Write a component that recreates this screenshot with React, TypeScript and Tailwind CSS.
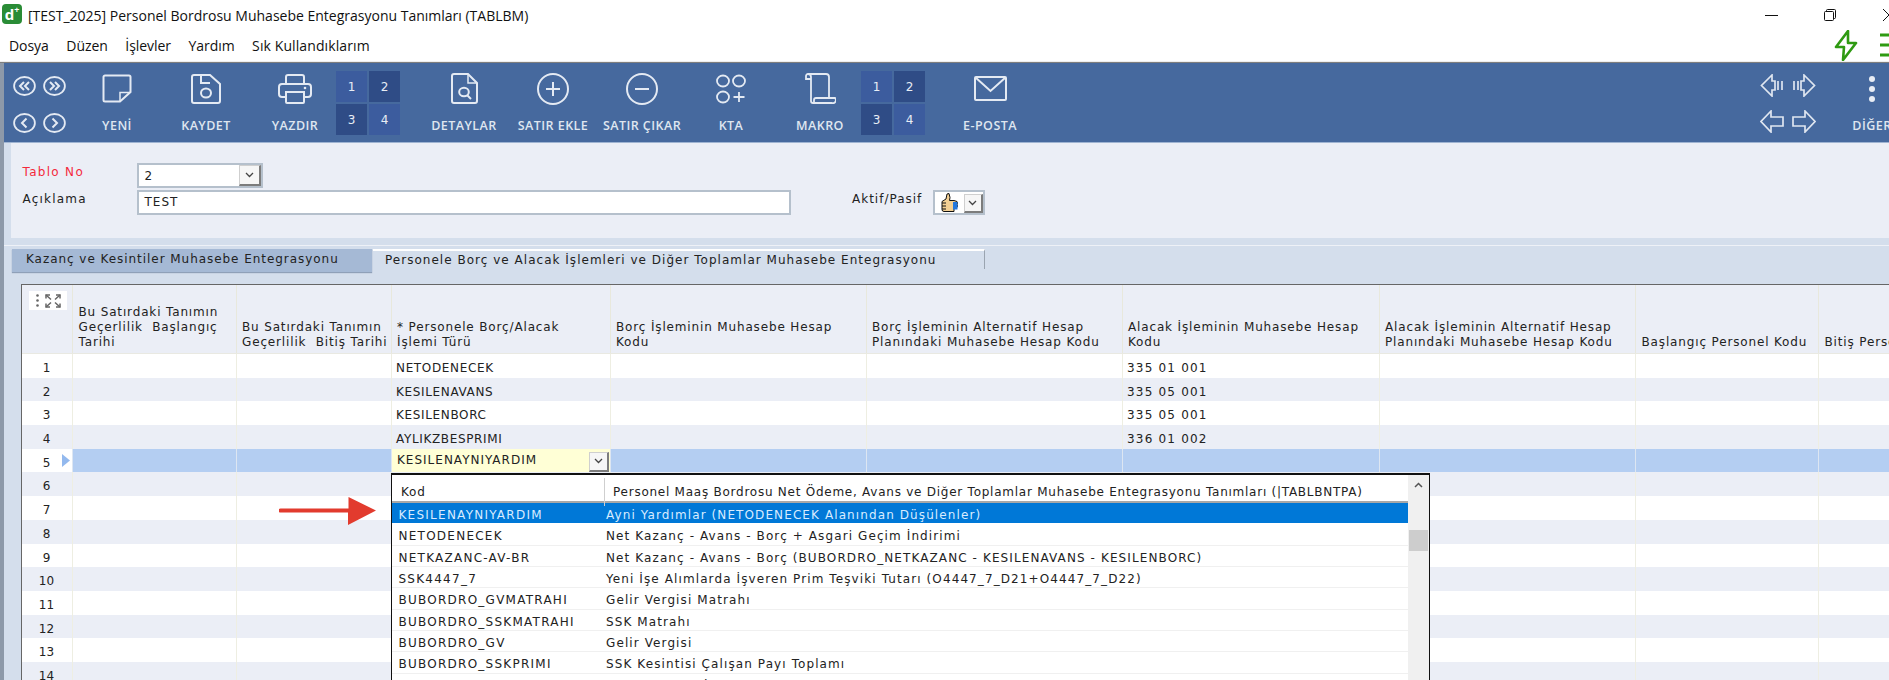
/**
 * Personel Bordrosu Muhasebe Entegrasyonu form (TABLBM): window chrome, blue toolbar,
 * header fields, tabs, the editable grid and the open lookup dropdown on row 5.
 */
import type { ReactNode } from "react";

const ICON = "#e4eaf3";

function Ellipse({ children }: { children: ReactNode }) {
  return (
    <svg width="23" height="20" viewBox="0 0 23 20" fill="none" stroke={ICON} strokeWidth="1.8">
      <ellipse cx="11.5" cy="10" rx="10.4" ry="9" />
      {children}
    </svg>
  );
}

function NavCircles() {
  return (
    <div className="w-[68.5px] shrink-0 pl-[9px] pt-[13px] grid grid-cols-[23px_23px] gap-x-[7px] gap-y-[17px] content-start">
      <Ellipse><path d="M11 6 7 10l4 4M16 6l-4 4 4 4" strokeWidth="2" /></Ellipse>
      <Ellipse><path d="M7 6l4 4-4 4M12 6l4 4-4 4" strokeWidth="2" /></Ellipse>
      <Ellipse><path d="M13.5 5.5 9 10l4.5 4.5" strokeWidth="2" /></Ellipse>
      <Ellipse><path d="M9.5 5.5 14 10l-4.5 4.5" strokeWidth="2" /></Ellipse>
    </div>
  );
}

function Tool({ label, children }: { label: string; children: ReactNode }) {
  return (
    <div className="w-[89px] shrink-0 pt-[9px] flex flex-col items-center">
      <div className="h-[33px] flex items-center justify-center">{children}</div>
      <div className="mt-[13px] h-[16px] whitespace-nowrap font-['Open_Sans'] text-[12.5px] font-semibold leading-[16px] tracking-[0.45px] text-[#dfe6f0]">
        {label}
      </div>
    </div>
  );
}

function PageGrid({ className }: { className: string }) {
  const cell = "flex items-center justify-center font-['DejaVu_Sans'] text-[12px] text-[#e8edf5]";
  return (
    <div className={`mt-[8px] w-[64px] shrink-0 h-[64px] grid grid-cols-[31px_31px] grid-rows-[31px_31px] gap-[2px] ${className}`}>
      <div className={`${cell} bg-[#3c5c9e]`}>1</div>
      <div className={`${cell} bg-[#2f4c86]`}>2</div>
      <div className={`${cell} bg-[#2f4c86]`}>3</div>
      <div className={`${cell} bg-[#3c5c9e]`}>4</div>
    </div>
  );
}

const arrowProps = { fill: "none", stroke: "#dfe6f0", strokeWidth: 1.7 };

function RecordArrows() {
  return (
    <div className="ml-[725.5px] w-[57px] shrink-0 pt-[11px] grid grid-cols-[24px_24px] gap-x-[8px] gap-y-[13px] content-start">
      <svg width="24" height="23" viewBox="0 0 24 23" {...arrowProps}>
        <path d="M12 1 1.5 11.5 12 22v-6h3V7h-3zM18 7v9M22 7v9" />
      </svg>
      <svg width="24" height="23" viewBox="0 0 24 23" {...arrowProps}>
        <path d="M12 1 22.5 11.5 12 22v-6H9V7h3zM6 7v9M2 7v9" />
      </svg>
      <svg width="24" height="23" viewBox="0 0 24 23" {...arrowProps}>
        <path d="M11 1 1 11.5 11 22v-6h12V7H11z" />
      </svg>
      <svg width="24" height="23" viewBox="0 0 24 23" {...arrowProps}>
        <path d="M13 1l10 10.5L13 22v-6H1V7h12z" />
      </svg>
    </div>
  );
}

function Toolbar() {
  return (
    <div className="h-[79px] shrink-0 flex overflow-hidden bg-[#46699e]">
      <NavCircles />
      <Tool label="YENİ">
        <svg width="30" height="29" viewBox="0 0 30 29" fill="none" stroke={ICON} strokeWidth="2">
          <path d="M3 1.5h24a1.5 1.5 0 0 1 1.500 1.500V18L18 27.500H3A1.500 1.500 0 0 1 1.500 26V3A1.500 1.500 0 0 1 3 1.500z" />
          <path d="M18 27V18.500h10" strokeWidth="1.5" />
        </svg>
      </Tool>
      <Tool label="KAYDET">
        <svg width="30" height="30" viewBox="0 0 30 30" fill="none" stroke={ICON} strokeWidth="2">
          <path d="M3 1h16l10 9v17a2 2 0 0 1-2 2H3a2 2 0 0 1-2-2V3a2 2 0 0 1 2-2z" />
          <path d="M10 1v8h9" />
          <ellipse cx="15" cy="19" rx="5" ry="4.500" />
        </svg>
      </Tool>
      <Tool label="YAZDIR">
        <svg width="34" height="30" viewBox="0 0 34 30" fill="none" stroke={ICON} strokeWidth="2">
          <path d="M8 10V3a2 2 0 0 1 2-2h14a2 2 0 0 1 2 2v7" />
          <path d="M8 23H4a3 3 0 0 1-3-3v-7a3 3 0 0 1 3-3h26a3 3 0 0 1 3 3v7a3 3 0 0 1-3 3h-4" />
          <path d="M8 18h18v10a1 1 0 0 1-1 1H9a1 1 0 0 1-1-1z" />
          <circle cx="27" cy="14" r="1.300" fill={ICON} stroke="none" />
        </svg>
      </Tool>
      <PageGrid className="ml-[-3.5px]" />
      <div className="w-[19.5px] shrink-0" />
      <Tool label="DETAYLAR">
        <svg width="27" height="31" viewBox="0 0 27 31" fill="none" stroke={ICON} strokeWidth="2">
          <path d="M3 1h14l9 9v18a2 2 0 0 1-2 2H3a2 2 0 0 1-2-2V3a2 2 0 0 1 2-2z" />
          <path d="M17 1v9h9" strokeWidth="1.500" />
          <ellipse cx="13" cy="19" rx="4.800" ry="4.300" />
          <path d="M16.500 22.500 20 26" />
        </svg>
      </Tool>
      <Tool label="SATIR EKLE">
        <svg width="32" height="32" viewBox="0 0 32 32" fill="none" stroke={ICON} strokeWidth="2">
          <circle cx="16" cy="16" r="15" />
          <path d="M16 9v14M9 16h14" />
        </svg>
      </Tool>
      <Tool label="SATIR ÇIKAR">
        <svg width="32" height="32" viewBox="0 0 32 32" fill="none" stroke={ICON} strokeWidth="2">
          <circle cx="16" cy="16" r="15" />
          <path d="M9 16h14" />
        </svg>
      </Tool>
      <Tool label="KTA">
        <svg width="30" height="30" viewBox="0 0 30 30" fill="none" stroke={ICON} strokeWidth="1.800">
          <ellipse cx="7" cy="7" rx="6" ry="5.500" />
          <ellipse cx="23" cy="7" rx="6" ry="5.500" />
          <ellipse cx="7" cy="23" rx="6" ry="5.500" />
          <path d="M23 18v10M17.500 23h11" />
        </svg>
      </Tool>
      <Tool label="MAKRO">
        <svg width="32" height="31" viewBox="0 0 32 31" fill="none" stroke={ICON} strokeWidth="1.800">
          <path d="M7 6H2V3a2 2 0 0 1 2-2h18a3 3 0 0 1 3 3v20" />
          <path d="M4 1a3 3 0 0 1 3 3v24a2 2 0 0 0 2 2h19a3 3 0 0 0 3-5H12a2 2 0 0 0-2 2v3" />
        </svg>
      </Tool>
      <PageGrid className="ml-[-3.5px]" />
      <div className="w-[20.5px] shrink-0" />
      <Tool label="E-POSTA">
        <svg width="33" height="25" viewBox="0 0 33 25" fill="none" stroke={ICON} strokeWidth="2">
          <rect x="1" y="1" width="31" height="23" rx="1" />
          <path d="M1.500 1.500 16.500 15l15-13.500" />
        </svg>
      </Tool>
      <RecordArrows />
      <div className="ml-[10.5px] shrink-0">
        <Tool label="DİĞER">
          <svg width="8" height="28" viewBox="0 0 8 28" fill="#e8edf5">
            <circle cx="4" cy="4" r="3" />
            <circle cx="4" cy="14" r="3" />
            <circle cx="4" cy="24" r="3" />
          </svg>
        </Tool>
      </div>
    </div>
  );
}

function DropButton({ className }: { className: string }) {
  return (
    <div className={`flex items-center justify-center bg-[#f6f6f6] border border-[#cfcfcf] border-r-2 border-b-2 border-r-[#7c7c7c] border-b-[#7c7c7c] ${className}`}>
      <svg width="9" height="6" viewBox="0 0 9 6" fill="none" stroke="#444" strokeWidth="1.300">
        <path d="M1 1l3.500 3.500L8 1" />
      </svg>
    </div>
  );
}

function HeaderForm() {
  return (
    <div className="h-[95px] shrink-0 ml-[7px] bg-[#ebeef6] pt-[20px] font-['DejaVu_Sans'] text-[12px] text-[#222]">
      <div className="flex h-[25px]">
        <div className="w-[125.5px] pl-[11.5px] text-[#f42a3c] tracking-[1.3px]">Tablo No</div>
        <div className="w-[126px] flex bg-white border-2 border-[#b5c0cc]">
          <div className="flex-1 pl-[6px] pt-[2px] tracking-[0.5px]">2</div>
          <DropButton className="w-[22px] h-[21px]" />
        </div>
      </div>
      <div className="flex h-[25px] mt-[2px]">
        <div className="w-[125.5px] pl-[11.5px] tracking-[1.2px]">Açıklama</div>
        <div className="w-[654px] bg-white border-2 border-[#b5c0cc] pl-[6px] pt-[1px] tracking-[1px]">TEST</div>
        <div className="w-[61.5px] ml-[61.5px] tracking-[1px] whitespace-nowrap">Aktif/Pasif</div>
        <div className="ml-[19px] w-[52px] flex bg-white border-2 border-[#b5c0cc]">
          <div className="w-[29px] flex items-center justify-center">
            <svg width="18" height="20" viewBox="0 0 18 20">
              <path d="M7 1l2-.5 1 4-.5 3H14a1.500 1.500 0 0 1 0 8v3H4a2 2 0 0 1-2-2V8.500L6 6z" fill="#f2cf93" stroke="#111" strokeWidth="1" />
              <path d="M2 10h4M2 13h4M2 16h4" stroke="#111" strokeWidth="1" />
              <rect x="13" y="9" width="4.500" height="7.500" fill="#2277dd" />
            </svg>
          </div>
          <DropButton className="flex-1 h-[19px] mt-[2px]" />
        </div>
      </div>
    </div>
  );
}

function Tabs() {
  return (
    <div className="h-[46px] shrink-0">
      <div className="h-[8px] border-b border-[#eef1f7]" />
      <div className="h-[3px]" />
      <div className="flex h-[23px] ml-[8px] font-['DejaVu_Sans'] text-[12px] text-[#222] whitespace-nowrap">
        <div className="w-[360px] bg-[#a5b9d5] pl-[14px] pt-[1px] tracking-[0.95px] shadow-[0_1px_1px_#8fa0b8]">
          Kazanç ve Kesintiler Muhasebe Entegrasyonu
        </div>
        <div className="ml-[1px] w-[612px] h-[20px] border-t-2 border-white border-r border-r-[#9aa4b0] pl-[12px] tracking-[1.02px]">
          Personele Borç ve Alacak İşlemleri ve Diğer Toplamlar Muhasebe Entegrasyonu
        </div>
      </div>
    </div>
  );
}

const GRID_COLS = "grid grid-cols-[51px_163.5px_155px_219px_256px_256px_257px_256.5px_183px_71px]";

const HEADERS = [
  "Bu Satırdaki Tanımın\nGeçerlilik  Başlangıç\nTarihi",
  "Bu Satırdaki Tanımın\nGeçerlilik  Bitiş Tarihi",
  "* Personele Borç/Alacak\nİşlemi Türü",
  "Borç İşleminin Muhasebe Hesap\nKodu",
  "Borç İşleminin Alternatif Hesap\nPlanındaki Muhasebe Hesap Kodu",
  "Alacak İşleminin Muhasebe Hesap\nKodu",
  "Alacak İşleminin Alternatif Hesap\nPlanındaki Muhasebe Hesap Kodu",
  "Başlangıç Personel Kodu",
  "Bitiş Personel Kodu",
];

// row no -> [işlem türü, alacak hesap kodu]
const ROWS: Record<number, [string, string]> = {
  1: ["NETODENECEK", "335 01 001"],
  2: ["KESILENAVANS", "335 05 001"],
  3: ["KESILENBORC", "335 05 001"],
  4: ["AYLIKZBESPRIMI", "336 01 002"],
};

function GridHeader() {
  return (
    <div className={`${GRID_COLS} h-[69px] bg-[#ebeef6] border-b border-[#e9e9e2]`}>
      <div className="border-r border-[#e8e8dc] pl-[7px] pt-[6px]">
        <div className="w-[37.5px] h-[19px] bg-white flex items-center gap-[6px] pl-[7px]">
          <svg width="3" height="13" viewBox="0 0 3 13" fill="#666">
            <circle cx="1.500" cy="1.500" r="1.300" />
            <circle cx="1.500" cy="6.500" r="1.300" />
            <circle cx="1.500" cy="11.500" r="1.300" />
          </svg>
          <svg width="16" height="14" viewBox="0 0 16 14" fill="none" stroke="#666" strokeWidth="1.500">
            <path d="M1 1l5 4.500M15 1l-5 4.500M1 13l5-4.500M15 13l-5-4.500" />
            <path d="M1 4.500V1h4M15 4.500V1h-4M1 9.500V13h4M15 9.500V13h-4" />
          </svg>
        </div>
      </div>
      {HEADERS.map((h) => (
        <div
          key={h}
          className="border-r border-[#e8e8dc] pl-[5.5px] pb-[3px] flex items-end font-['DejaVu_Sans'] text-[12px] leading-[15px] tracking-[0.85px] text-[#222] whitespace-pre overflow-hidden"
        >
          {h}
        </div>
      ))}
    </div>
  );
}

function GridRow({ no }: { no: number }) {
  const selected = no === 5;
  const bg = selected ? "bg-[#b4cef2]" : no % 2 === 0 ? "bg-[#ebeef6]" : "bg-white";
  const sep = selected ? "border-r border-[#dde6f2]" : "border-r border-[#eeeee2]";
  const row = ROWS[no];
  const text = "pl-[4.5px] pt-[5px] font-['DejaVu_Sans'] text-[12px] leading-[18px] text-[#222]";
  return (
    <div className={`${GRID_COLS} h-[23.7px] ${bg} overflow-hidden`}>
      <div className={`${selected ? "bg-white" : ""} ${sep} relative pt-[5px] text-center pr-[1px] font-['DejaVu_Sans'] text-[12px] leading-[18px] text-[#222]`}>
        {no}
        {selected && (
          <svg className="absolute left-[40px] top-[5px]" width="8" height="13" viewBox="0 0 8 13" fill="#93b9ee">
            <path d="M0 0l8 6.500L0 13z" />
          </svg>
        )}
      </div>
      <div className={sep} />
      <div className={sep} />
      {selected ? (
        <div className={`${sep} h-[23px] flex bg-[#ffffd6] pl-[5.5px] pr-px font-['DejaVu_Sans'] text-[12px] leading-[18px] text-[#222] tracking-[1px]`}>
          <div className="flex-1 pt-[2px]">KESILENAYNIYARDIM</div>
          <DropButton className="w-[20px] h-[20px] mt-[3px]" />
        </div>
      ) : (
        <div className={`${sep} ${text} tracking-[0.65px]`}>{row?.[0]}</div>
      )}
      <div className={sep} />
      <div className={sep} />
      <div className={`${sep} ${text} tracking-[1.2px]`}>{row?.[1]}</div>
      <div className={sep} />
      <div className={sep} />
      <div className={sep} />
    </div>
  );
}

const LOOKUP: [string, string][] = [
  ["KESILENAYNIYARDIM", "Ayni Yardımlar (NETODENECEK Alanından Düşülenler)"],
  ["NETODENECEK", "Net Kazanç - Avans - Borç + Asgari Geçim İndirimi"],
  ["NETKAZANC-AV-BR", "Net Kazanç - Avans - Borç (BUBORDRO_NETKAZANC - KESILENAVANS - KESILENBORC)"],
  ["SSK4447_7", "Yeni İşe Alımlarda İşveren Prim Teşviki Tutarı (O4447_7_D21+O4447_7_D22)"],
  ["BUBORDRO_GVMATRAHI", "Gelir Vergisi Matrahı"],
  ["BUBORDRO_SSKMATRAHI", "SSK Matrahı"],
  ["BUBORDRO_GV", "Gelir Vergisi"],
  ["BUBORDRO_SSKPRIMI", "SSK Kesintisi Çalışan Payı Toplamı"],
  ["BUBORDRO_AGI", "Asgari Geçim İndirimi"],
];

function LookupDropdown() {
  return (
    <div className="absolute left-[391px] top-[473px] w-[1039px] h-[220px] flex bg-white border-t-2 border-x border-[#111] font-['DejaVu_Sans'] text-[12px] text-[#222] whitespace-nowrap">
      <div className="flex-1 min-w-0">
        <div className="h-[28px] grid grid-cols-[213px_1fr] border-b-2 border-[#a8a8a8] pt-[3px] leading-[28px]">
          <div className="pl-[9px] border-r border-[#cfcfcf] tracking-[0.8px]">Kod</div>
          <div className="pl-[8px] tracking-[0.75px]">
            Personel Maaş Bordrosu Net Ödeme, Avans ve Diğer Toplamlar Muhasebe Entegrasyonu Tanımları (|TABLBNTPA)
          </div>
        </div>
        {LOOKUP.map(([code, desc], i) => (
          <div
            key={code}
            className={`h-[21.33px] grid grid-cols-[213px_1fr] leading-[22px] border-b ${
              i === 0 ? "bg-[#0078d7] text-[#d9ecff] border-white" : "border-[#f0f0f0]"
            }`}
          >
            <div className="pl-[6.5px] pt-[1px] tracking-[1.25px]">{code}</div>
            <div className="pl-[1px] pt-[1px] tracking-[1.1px]">{desc}</div>
          </div>
        ))}
      </div>
      <div className="w-[21px] shrink-0 bg-[#f0f0f0] flex flex-col items-center">
        <svg className="mt-[7px]" width="9" height="6" viewBox="0 0 9 6" fill="none" stroke="#555" strokeWidth="1.500">
          <path d="M1 5l3.500-3.500L8 5" />
        </svg>
        <div className="mt-[42px] w-[19.500px] h-[21px] bg-[#cdcdcd]" />
      </div>
    </div>
  );
}

function RedArrow() {
  return (
    <svg className="absolute left-[279px] top-[497px]" width="97" height="28" viewBox="0 0 97 28" fill="#e23b2e">
      <path d="M1.500 11.500h68V0L97 13.500 69 28V15.500h-67.500a2 2 0 0 1 0-4z" />
    </svg>
  );
}

function TitleBars() {
  return (
    <>
      <div className="h-[30px] flex items-center shrink-0">
        <div className="ml-[2px] mt-[-2px] w-[20px] h-[20px] rounded-[4px] bg-[#2a8c36] flex items-center justify-center font-['Open_Sans'] font-bold text-white text-[15px] leading-[18px]">
          d<span className="mb-[8px] text-[9px] leading-[10px]">+</span>
        </div>
        <div className="ml-[6px] font-['Open_Sans'] text-[14px] text-[#111] whitespace-nowrap">
          [TEST_2025] Personel Bordrosu Muhasebe Entegrasyonu Tanımları (TABLBM)
        </div>
        <div className="ml-auto flex items-center">
          <div className="w-[13px] h-px bg-[#111]" />
          <svg className="ml-[46px]" width="12" height="12" viewBox="0 0 12 12" fill="none" stroke="#111" strokeWidth="1">
            <rect x="0.500" y="2.500" width="9" height="9" rx="1" />
            <path d="M2.500 2.500V1.500a1 1 0 0 1 1-1h7a1 1 0 0 1 1 1v7a1 1 0 0 1-1 1h-1" />
          </svg>
          <svg className="ml-[47px]" width="6" height="12" viewBox="0 0 6 12" fill="none" stroke="#111" strokeWidth="1">
            <path d="M0 0l6 6-6 6" />
          </svg>
        </div>
      </div>
      <div className="h-[31px] flex shrink-0 font-['Open_Sans'] text-[14px] text-[#111] whitespace-nowrap">
        <div className="flex pl-[9px] gap-[17.5px] pt-[5px] tracking-[-0.05px]">
          <span>Dosya</span>
          <span>Düzen</span>
          <span>İşlevler</span>
          <span>Yardım</span>
          <span className="tracking-[0.1px]">Sık Kullandıklarım</span>
        </div>
        <div className="ml-auto flex">
          <svg width="24" height="31" viewBox="0 0 24 31" fill="none" stroke="#2f9a12" strokeWidth="2.600" strokeLinejoin="round">
            <path d="M14 1 2 17h8l-1 13 13-17h-8z" />
          </svg>
          <svg className="ml-[22px]" width="9" height="31" viewBox="0 0 9 31" fill="none" stroke="#2f9a12" strokeWidth="3">
            <path d="M0 5h9M0 15h9M0 25h9" />
          </svg>
        </div>
      </div>
    </>
  );
}

export default function App() {
  return (
    <div className="relative w-[1889px] h-[680px] overflow-hidden flex flex-col bg-white">
      <TitleBars />
      <div className="h-[2px] shrink-0 bg-[#eeeeee] border-b border-[#7e7e7e]" />
      <div className="flex-1 min-h-0 flex flex-col border-l-4 border-[#8d99a9] bg-[#d4deec]">
        <Toolbar />
        <div className="h-px shrink-0 bg-[#9fb4d2]" />
        <HeaderForm />
        <Tabs />
        <div className="ml-[17px] flex-1 min-h-0 overflow-hidden border-t border-l border-[#666] bg-white">
          <GridHeader />
          {Array.from({ length: 14 }, (_, i) => (
            <GridRow key={i} no={i + 1} />
          ))}
        </div>
      </div>
      <LookupDropdown />
      <RedArrow />
    </div>
  );
}
